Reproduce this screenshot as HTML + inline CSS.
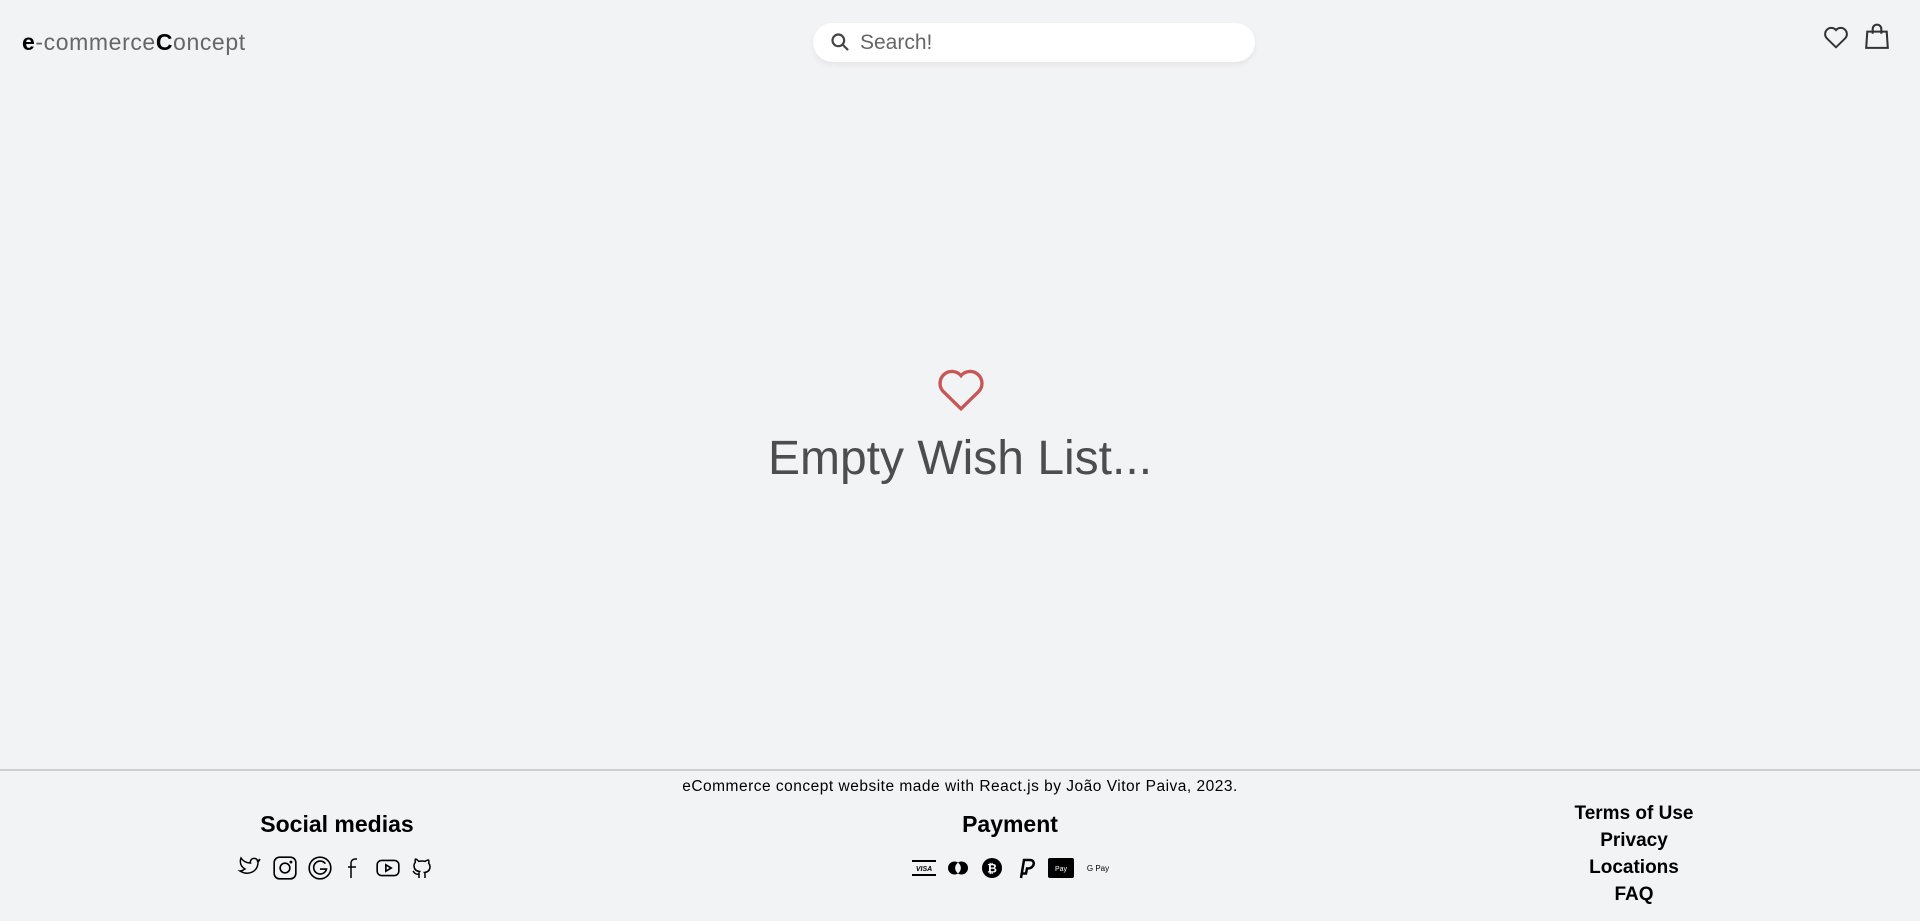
<!DOCTYPE html>
<html><head><meta charset="utf-8"><style>
*{margin:0;padding:0;box-sizing:border-box}
body{width:1920px;height:921px;background:#f2f3f5;font-family:"Liberation Sans",sans-serif;position:relative;overflow:hidden;color:#000}
.logo{position:absolute;left:22px;top:29px;font-size:23px;color:#666;letter-spacing:0.6px}
.logo b{color:#000}
.search{position:absolute;left:813px;top:23px;width:442px;height:39px;background:#fff;border-radius:20px;box-shadow:0 3px 6px rgba(0,0,0,.06)}
.search span{position:absolute;left:47px;top:8px;font-size:21px;color:#666}
.search svg{position:absolute;left:17px;top:9px}
.top{position:absolute;top:25px}
.mid{position:absolute;left:0;width:1920px;text-align:center}
.t{position:absolute;text-align:center}
.line{position:absolute;left:0;top:769px;width:1920px;height:2px;background:#cfcfcf}
.soc svg,.pay svg{display:inline-block;vertical-align:middle}
</style></head><body>
<div class="logo"><b>e</b>-commerce<b>C</b>oncept</div>
<div class="search"><svg width="20" height="20" viewBox="0 0 24 24" fill="none" stroke="#444" stroke-width="2.6" stroke-linecap="round"><circle cx="10" cy="10" r="7"/><path d="M15 15l6 6"/></svg><span>Search!</span></div>
<svg class="top" style="left:1823px" width="26" height="24" viewBox="0 0 24 22" fill="none" stroke="#333" stroke-width="1.8"><path d="M12 20.5L3.3 12A5.3 5.3 0 0 1 12 4.6 5.3 5.3 0 0 1 20.7 12z"/></svg>
<svg class="top" style="left:1865px;top:23px" width="24" height="27" viewBox="0 0 22 25" fill="none" stroke="#333" stroke-width="1.9"><path d="M2 8h18l1 15H1z"/><path d="M7 10V5.5a4 4 0 0 1 8 0V10"/></svg>
<svg style="position:absolute;left:936px;top:366px" width="50" height="46" viewBox="0 0 24 22" fill="none" stroke="#c75656" stroke-width="1.6"><path d="M12 20.5L3.3 12A5.3 5.3 0 0 1 12 4.6 5.3 5.3 0 0 1 20.7 12z"/></svg>
<div class="mid" style="top:431px;font-size:48px;color:#4d4d4d">Empty Wish List...</div>
<div class="line"></div>
<div class="mid" style="top:778px;font-size:15.5px;letter-spacing:0.5px">eCommerce concept website made with React.js by João Vitor Paiva, 2023.</div>
<div class="t" style="left:237px;width:200px;top:811px;font-size:23px;font-weight:bold">Social medias</div>
<div class="t" style="left:910px;width:200px;top:811px;font-size:23px;font-weight:bold">Payment</div>
<div class="soc" style="position:absolute;left:237px;top:855px;display:flex;gap:9px">
<svg width="26" height="24" viewBox="0 0 24 24" fill="none" stroke="#000" stroke-width="1.5"><path d="M22 4s-1 1.5-2.5 2C19 3 14 2 12.5 6c-.3 1 0 2 0 2C8 8 5 6 3 3c0 0-3 7 4 11-1.5 1-3.5 2-5 2 8 5 18 1 18-9 .8-.7 2-3 2-3z"/></svg>
<svg width="26" height="26" viewBox="0 0 24 24" fill="none" stroke="#000" stroke-width="1.5"><rect x="2" y="2" width="20" height="20" rx="5"/><circle cx="12" cy="12" r="4.5"/><circle cx="17.5" cy="6.5" r=".6"/></svg>
<svg width="26" height="26" viewBox="0 0 24 24" fill="none" stroke="#000" stroke-width="1.5"><circle cx="12" cy="12" r="10"/><path d="M17 8a6 6 0 1 0 1 5h-6"/></svg>
<svg width="24" height="26" viewBox="0 0 24 24" fill="none" stroke="#000" stroke-width="1.5"><path d="M15 3h-2a4 4 0 0 0-4 4v15M6 11h8"/></svg>
<svg width="26" height="26" viewBox="0 0 24 24" fill="none" stroke="#000" stroke-width="1.5"><rect x="2" y="5" width="20" height="14" rx="4"/><path d="M10 9v6l5-3z"/></svg>
<svg width="24" height="26" viewBox="0 0 24 24" fill="none" stroke="#000" stroke-width="1.5"><path d="M9 22v-4c-4 1-5-2-6-3M15 22v-3.5c0-1 .1-1.4-.5-2 2.8-.3 5.5-1.4 5.5-6a4.6 4.6 0 0 0-1.3-3.2 4.2 4.2 0 0 0-.1-3.2s-1.1-.3-3.5 1.3a12 12 0 0 0-6.2 0C6.5 2.8 5.4 3.1 5.4 3.1a4.2 4.2 0 0 0-.1 3.2A4.6 4.6 0 0 0 4 9.5c0 4.6 2.7 5.7 5.5 6-.6.6-.6 1.2-.5 2V22"/></svg>
</div>
<div class="pay" style="position:absolute;left:912px;top:856px;display:flex;gap:10px;align-items:center">
<svg width="24" height="20" viewBox="0 0 24 20"><rect x="0" y="2" width="24" height="2" fill="#000"/><rect x="0" y="16" width="24" height="2" fill="#000"/><text x="12" y="13" font-size="7" text-anchor="middle" font-family="Liberation Sans" font-weight="bold" font-style="italic">VISA</text></svg>
<svg width="24" height="20" viewBox="0 0 24 20"><circle cx="8.5" cy="10" r="6.5" fill="#000"/><circle cx="15.5" cy="10" r="6.5" fill="#000"/><path d="M12 4.6a6.5 6.5 0 0 1 0 10.8 6.5 6.5 0 0 1 0-10.8z" fill="#f2f3f5"/></svg>
<svg width="24" height="24" viewBox="0 0 24 24"><circle cx="12" cy="12" r="10" fill="#000"/><text x="12" y="16.5" font-size="12" text-anchor="middle" fill="#fff" font-family="Liberation Sans" font-weight="bold">₿</text></svg>
<svg width="24" height="24" viewBox="0 0 24 24"><path d="M7 22l3-18h6c4 0 5 4 2 7-1 1-3 1.5-5 1.5l-1 5H8" fill="none" stroke="#000" stroke-width="2.5"/></svg>
<svg width="26" height="20" viewBox="0 0 26 20"><rect width="26" height="20" rx="2" fill="#000"/><text x="13" y="13" font-size="7" text-anchor="middle" fill="#fff" font-family="Liberation Sans"> Pay</text></svg>
<svg width="28" height="20" viewBox="0 0 28 20"><text x="14" y="13" font-size="8" text-anchor="middle" font-family="Liberation Sans">G Pay</text></svg>
</div>
<div class="t" style="left:1534px;width:200px;top:800px;font-size:19px;font-weight:bold;line-height:27px">Terms of Use<br>Privacy<br>Locations<br>FAQ</div>
</body></html>
